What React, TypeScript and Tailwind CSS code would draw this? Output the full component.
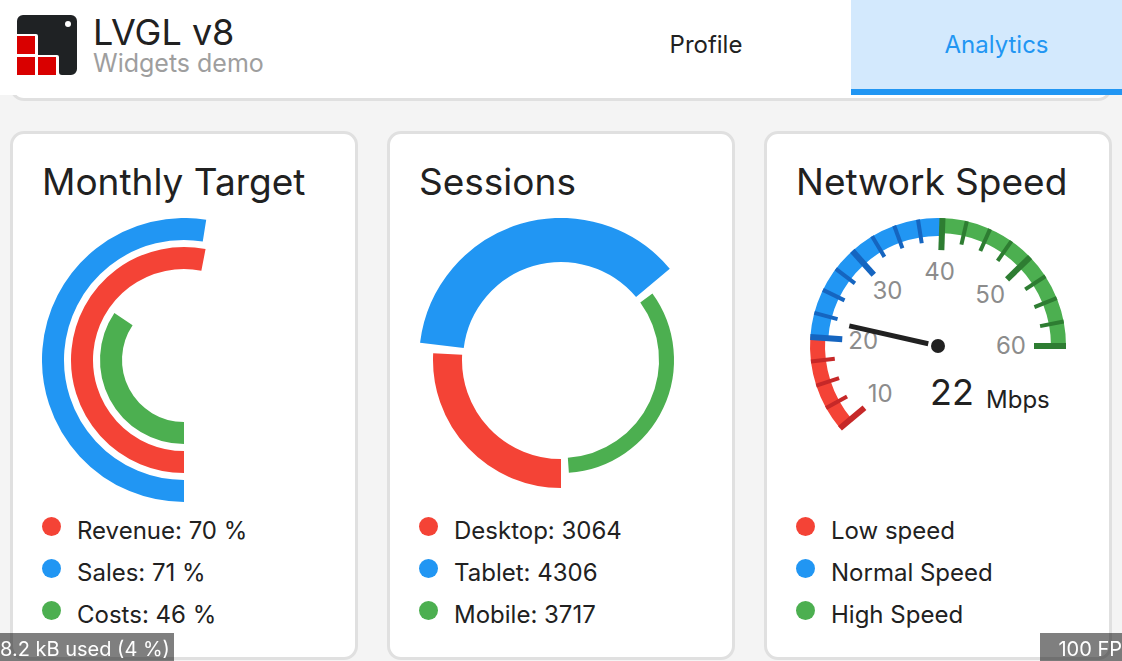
type LegendItem = { color: string; text: string };

const RED = "#f44336";
const BLUE = "#2196f3";
const GREEN = "#4caf50";

const polar = (cx: number, cy: number, r: number, deg: number) => {
  const a = (deg * Math.PI) / 180;
  return [cx + r * Math.cos(a), cy + r * Math.sin(a)];
};

// outer: outer radius, angles run clockwise from 3 o'clock
const Arc = ({
  cx = 142,
  cy = 142,
  outer,
  width,
  from,
  to,
  color,
}: {
  cx?: number;
  cy?: number;
  outer: number;
  width: number;
  from: number;
  to: number;
  color: string;
}) => {
  const r = outer - width / 2;
  const [x1, y1] = polar(cx, cy, r, from);
  const [x2, y2] = polar(cx, cy, r, to);
  const large = to - from > 180 ? 1 : 0;
  return (
    <path
      d={`M${x1} ${y1}A${r} ${r} 0 ${large} 1 ${x2} ${y2}`}
      fill="none"
      stroke={color}
      strokeWidth={width}
    />
  );
};

const TargetChart = () => (
  <svg viewBox="0 0 284 284" className="w-full">
    <Arc outer={142} width={22} from={90} to={279} color={BLUE} />
    <Arc outer={113} width={22} from={90} to={281} color={RED} />
    <Arc outer={84} width={22} from={90} to={214} color={GREEN} />
  </svg>
);

const SessionsChart = () => (
  <svg viewBox="0 0 284 284" className="w-full">
    <Arc outer={142} width={44} from={187} to={320} color={BLUE} />
    <Arc outer={128} width={29} from={90} to={183} color={RED} />
    <Arc outer={113} width={15} from={324} to={446} color={GREEN} />
  </svg>
);

const SpeedGauge = ({ value }: { value: number }) => {
  const cx = 142;
  const cy = 128;
  const angle = (v: number) => 140 + (v - 10) * 4.4;
  const ticks = Array.from({ length: 21 }, (_, i) => 10 + i * 2.5);
  const tickColor = (v: number) =>
    v < 20 ? "#c62828" : v < 40 ? "#1565c0" : "#2e7d32";
  const [nx1, ny1] = polar(cx, cy, 10, angle(value));
  const [nx2, ny2] = polar(cx, cy, 91, angle(value));

  return (
    <svg viewBox="0 0 284 284" className="w-full">
      <Arc cx={cx} cy={cy} outer={128} width={15} from={140} to={184} color={RED} />
      <Arc cx={cx} cy={cy} outer={128} width={18} from={184} to={271} color={BLUE} />
      <Arc cx={cx} cy={cy} outer={128} width={15} from={271} to={360} color={GREEN} />
      {ticks.map((v) => {
        const major = v % 10 === 0;
        const [x1, y1] = polar(cx, cy, 128, angle(v));
        const [x2, y2] = polar(cx, cy, major ? 96 : 104, angle(v));
        return (
          <line
            key={v}
            x1={x1}
            y1={y1}
            x2={x2}
            y2={y2}
            stroke={tickColor(v)}
            strokeWidth={major ? 6 : 4}
          />
        );
      })}
      {[10, 20, 30, 40, 50, 60].map((v) => {
        const [x, y] = polar(cx - 1, cy, 74, angle(v));
        return (
          <text
            key={v}
            x={x}
            y={y + 8}
            textAnchor="middle"
            className="fill-[#8c8c8c] text-[24px]"
          >
            {v}
          </text>
        );
      })}
      <line x1={nx1} y1={ny1} x2={nx2} y2={ny2} stroke="#212121" strokeWidth={5} />
      <circle cx={cx} cy={cy} r={7} fill="#212121" />
      <text x={134} y={187} className="fill-[#212121] text-[36px]">
        {value}
      </text>
      <text x={190} y={190} className="fill-[#212121] text-[24px]">
        Mbps
      </text>
    </svg>
  );
};

const Card = ({
  title,
  legend,
  children,
}: {
  title: string;
  legend: LegendItem[];
  children: React.ReactNode;
}) => (
  <section className="rounded-[14px] border-[3px] border-[#e0e0e0] bg-white px-[29px] py-7">
    <h2 className="mb-4 text-[37px] leading-10 whitespace-nowrap">{title}</h2>
    {children}
    <ul className="mt-[15px] flex flex-col gap-[14px]">
      {legend.map((item) => (
        <li key={item.text} className="flex items-start gap-4">
          <span
            className="size-[19px] shrink-0 rounded-full"
            style={{ backgroundColor: item.color }}
          />
          <span className="text-[24px] leading-7 whitespace-nowrap">
            {item.text}
          </span>
        </li>
      ))}
    </ul>
  </section>
);

const Logo = () => (
  <svg viewBox="0 0 60 60" className="size-[60px] shrink-0">
    <path
      d="M6 0H54A6 6 0 0 1 60 6V54A6 6 0 0 1 54 60H45A3 3 0 0 1 42 57V42A2 2 0 0 0 40 40H21V21A2 2 0 0 0 19 19H0V6A6 6 0 0 1 6 0Z"
      fill="#1f2224"
    />
    <circle cx="51" cy="9" r="3" fill="#fff" />
    <path d="M0 21H18V39H0ZM0 42H18V60H0ZM21 42H39V60H21Z" fill="#d90000" />
  </svg>
);

const App = () => {
  return (
    <div className="min-h-screen bg-[#f4f4f4] font-['Inter',sans-serif] text-[#212121]">
      <header className="relative z-10 flex h-[95px] justify-between bg-white">
        <div className="flex items-start gap-4 pt-[15px] pl-[17px]">
          <Logo />
          <div>
            <h1 className="text-[36px] leading-[34px]">LVGL v8</h1>
            <p className="text-[25px] leading-7 text-[#9e9e9e]">Widgets demo</p>
          </div>
        </div>
        <nav className="flex text-[24px]">
          <button className="w-[290px] border-b-[6px] border-transparent">
            Profile
          </button>
          <button className="w-[271px] border-b-[6px] border-[#2196f3] bg-[#d3e9fd] pl-5 text-[#2196f3]">
            Analytics
          </button>
        </nav>
      </header>

      <main className="px-[10px]">
        {/* bottom edge of the card scrolled under the header */}
        <div className="-mt-8 mb-[30px] h-[38px] rounded-[14px] border-[3px] border-[#e0e0e0] bg-white" />
        <div className="grid grid-cols-3 gap-[29px]">
          <Card
            title="Monthly Target"
            legend={[
              { color: RED, text: "Revenue: 70 %" },
              { color: BLUE, text: "Sales: 71 %" },
              { color: GREEN, text: "Costs: 46 %" },
            ]}
          >
            <TargetChart />
          </Card>
          <Card
            title="Sessions"
            legend={[
              { color: RED, text: "Desktop: 3064" },
              { color: BLUE, text: "Tablet: 4306" },
              { color: GREEN, text: "Mobile: 3717" },
            ]}
          >
            <SessionsChart />
          </Card>
          <Card
            title="Network Speed"
            legend={[
              { color: RED, text: "Low speed" },
              { color: BLUE, text: "Normal Speed" },
              { color: GREEN, text: "High Speed" },
            ]}
          >
            <SpeedGauge value={22} />
          </Card>
        </div>
      </main>

      <div className="fixed bottom-0 left-0 h-7 bg-black/50 pr-1 text-[20px] leading-8 whitespace-nowrap text-white">
        8.2 kB used (4 %)
      </div>
      <div className="fixed right-0 bottom-0 h-7 bg-black/50 pl-[18px] text-[20px] leading-8 whitespace-nowrap text-white">
        100 FP
      </div>
    </div>
  );
};

export default App;
